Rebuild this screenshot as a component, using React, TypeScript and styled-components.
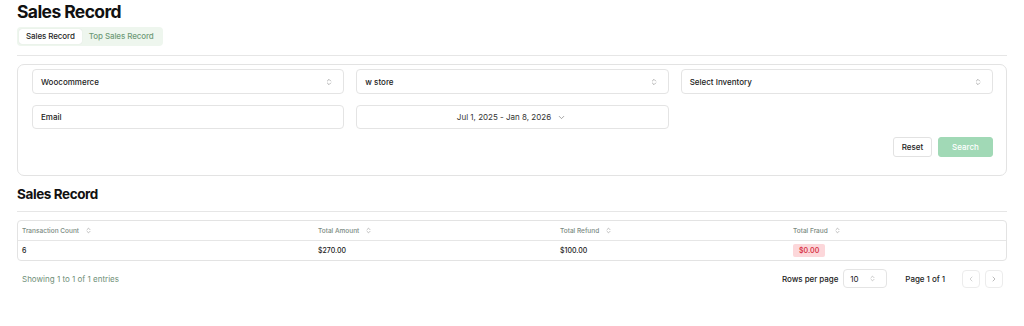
import React from "react";
import styled, { createGlobalStyle } from "styled-components";

const Global = createGlobalStyle`
  html, body { margin: 0; padding: 0; background: #fff; }
  body { font-family: Inter, "Noto Sans", sans-serif; color: #1a1a1a; }
  * { box-sizing: border-box; }
`;

const Page = styled.div`
  padding: 0 17px 0 17px;
  width: 1024px;
`;

const Title = styled.h1`
  margin: 0;
  font-size: 17.5px;
  line-height: 23px;
  font-weight: 700;
  letter-spacing: -0.6px;
  color: #111;
`;

const Tabs = styled.div`
  display: inline-flex;
  margin-top: 3px;
  padding: 2px;
  background: #eef6ee;
  border-radius: 4px;
`;

const Tab = styled.div<{ $active?: boolean }>`
  font-size: 8px;
  line-height: 15px;
  padding: 0 7px;
  border-radius: 3px;
  font-weight: 500;
  letter-spacing: -0.1px;
  background: ${(p) => (p.$active ? "#fff" : "transparent")};
  color: ${(p) => (p.$active ? "#1f1f1f" : "#6f9b78")};
  box-shadow: ${(p) => (p.$active ? "0 0 1px rgba(0,0,0,0.15)" : "none")};
`;

const Divider = styled.div<{ $top: number; $bottom: number }>`
  height: 1px;
  background: #e6e6e6;
  margin-top: ${(p) => p.$top}px;
  margin-bottom: ${(p) => p.$bottom}px;
`;

const Card = styled.div`
  border: 1px solid #e3e3e3;
  border-radius: 7px;
  padding: 4px 13px 18px 14px;
`;

const Grid = styled.div`
  display: grid;
  grid-template-columns: repeat(3, 1fr);
  column-gap: 12px;
  row-gap: 11px;
`;

const Field = styled.div<{ $center?: boolean; $h: number }>`
  height: ${(p) => p.$h}px;
  border: 1px solid #e4e4e4;
  border-radius: 4px;
  display: flex;
  align-items: center;
  justify-content: ${(p) => (p.$center ? "center" : "space-between")};
  padding: 0 10px 0 8px;
  font-size: 8px;
  font-weight: 500;
  color: #222;
  gap: 6px;
`;

const DateText = styled.span`
  color: #333;
  font-weight: 400;
  font-size: 8px;
`;

const Actions = styled.div`
  display: flex;
  justify-content: flex-end;
  gap: 6px;
  margin-top: 8px;
`;

const Button = styled.button<{ $primary?: boolean }>`
  height: 20px;
  border-radius: 3px;
  font-family: inherit;
  font-size: 8px;
  font-weight: 500;
  padding: 0;
  width: ${(p) => (p.$primary ? "55px" : "39px")};
  border: 1px solid ${(p) => (p.$primary ? "#a1d9b6" : "#e2e2e2")};
  background: ${(p) => (p.$primary ? "#a1d9b6" : "#fff")};
  color: ${(p) => (p.$primary ? "#fff" : "#222")};
`;

const SubTitle = styled.h2`
  margin: 9px 0 0 0;
  font-size: 13.5px;
  line-height: 18px;
  font-weight: 700;
  color: #111;
  letter-spacing: -0.4px;
`;

const Table = styled.div`
  border: 1px solid #e3e3e3;
  border-radius: 4px;
`;

const Row = styled.div<{ $head?: boolean }>`
  display: grid;
  grid-template-columns: 296px 242px 233px 1fr;
  height: ${(p) => (p.$head ? 20 : 19)}px;
  align-items: center;
  padding-left: 4px;
  border-bottom: ${(p) => (p.$head ? "1px solid #e6e6e6" : "none")};
`;

const HeadCell = styled.div`
  display: flex;
  align-items: center;
  gap: 6px;
  font-size: 6.5px;
  color: #7a897f;
  font-weight: 500;
`;

const Cell = styled.div`
  font-size: 7px;
  color: #222;
  font-weight: 500;
`;

const Badge = styled.span`
  display: inline-block;
  background: #fcd7da;
  color: #d8394b;
  font-size: 7px;
  font-weight: 600;
  padding: 2px 6px;
  border-radius: 2px;
  line-height: 9px;
`;

const Footer = styled.div`
  display: flex;
  align-items: center;
  justify-content: space-between;
  margin-top: 8px;
  padding-left: 5px;
  padding-right: 4px;
`;

const Showing = styled.div`
  font-size: 8px;
  color: #6f8f78;
`;

const Pager = styled.div`
  display: flex;
  align-items: center;
`;

const Label = styled.span`
  font-size: 8px;
  font-weight: 500;
  color: #222;
  letter-spacing: -0.05px;
`;

const RowsSelect = styled.div`
  width: 44px;
  height: 19px;
  border: 1px solid #e4e4e4;
  border-radius: 4px;
  margin-left: 5px;
  margin-right: 18px;
  display: flex;
  align-items: center;
  justify-content: space-between;
  padding: 0 10px 0 6px;
  font-size: 8px;
  color: #222;
`;

const NavGroup = styled.div`
  display: flex;
  gap: 5px;
  margin-left: 17px;
`;

const NavBtn = styled.div`
  width: 18px;
  height: 18px;
  border: 1px solid #ececec;
  border-radius: 4px;
  display: flex;
  align-items: center;
  justify-content: center;
`;

const UpDown = ({ size = 7, color = "#999" }: { size?: number; color?: string }) => (
  <svg width={size} height={size} viewBox="0 0 24 24" fill="none" stroke={color} strokeWidth={2.2} strokeLinecap="round" strokeLinejoin="round">
    <path d="m7 15 5 5 5-5" />
    <path d="m7 9 5-5 5 5" />
  </svg>
);

const Chevron = ({ d, size = 8, color = "#888" }: { d: string; size?: number; color?: string }) => (
  <svg width={size} height={size} viewBox="0 0 24 24" fill="none" stroke={color} strokeWidth={2} strokeLinecap="round" strokeLinejoin="round">
    <path d={d} />
  </svg>
);

export default function App() {
  return (
    <>
      <Global />
      <Page>
        <Title>Sales Record</Title>
        <Tabs>
          <Tab $active>Sales Record</Tab>
          <Tab>Top Sales Record</Tab>
        </Tabs>
        <Divider $top={9} $bottom={8} />
        <Card>
          <Grid>
            <Field $h={25}>
              Woocommerce <UpDown size={8} />
            </Field>
            <Field $h={25}>
              w store <UpDown size={8} />
            </Field>
            <Field $h={25}>
              Select Inventory <UpDown size={8} />
            </Field>
            <Field $h={24}>Email</Field>
            <Field $h={24} $center>
              <DateText>Jul 1, 2025 - Jan 8, 2026</DateText>
              <Chevron d="m6 9 6 6 6-6" size={9} />
            </Field>
          </Grid>
          <Actions>
            <Button>Reset</Button>
            <Button $primary>Search</Button>
          </Actions>
        </Card>
        <SubTitle>Sales Record</SubTitle>
        <Divider $top={8} $bottom={8} />
        <Table>
          <Row $head>
            <HeadCell>
              Transaction Count <UpDown size={7} />
            </HeadCell>
            <HeadCell>
              Total Amount <UpDown size={7} />
            </HeadCell>
            <HeadCell>
              Total Refund <UpDown size={7} />
            </HeadCell>
            <HeadCell>
              Total Fraud <UpDown size={7} />
            </HeadCell>
          </Row>
          <Row>
            <Cell>6</Cell>
            <Cell>$270.00</Cell>
            <Cell>$100.00</Cell>
            <Cell>
              <Badge>$0.00</Badge>
            </Cell>
          </Row>
        </Table>
        <Footer>
          <Showing>Showing 1 to 1 of 1 entries</Showing>
          <Pager>
            <Label>Rows per page</Label>
            <RowsSelect>
              10 <UpDown size={7} color="#aaa" />
            </RowsSelect>
            <Label>Page 1 of 1</Label>
            <NavGroup>
              <NavBtn>
                <Chevron d="m15 18-6-6 6-6" size={8} color="#bbb" />
              </NavBtn>
              <NavBtn>
                <Chevron d="m9 18 6-6-6-6" size={8} color="#999" />
              </NavBtn>
            </NavGroup>
          </Pager>
        </Footer>
      </Page>
    </>
  );
}
